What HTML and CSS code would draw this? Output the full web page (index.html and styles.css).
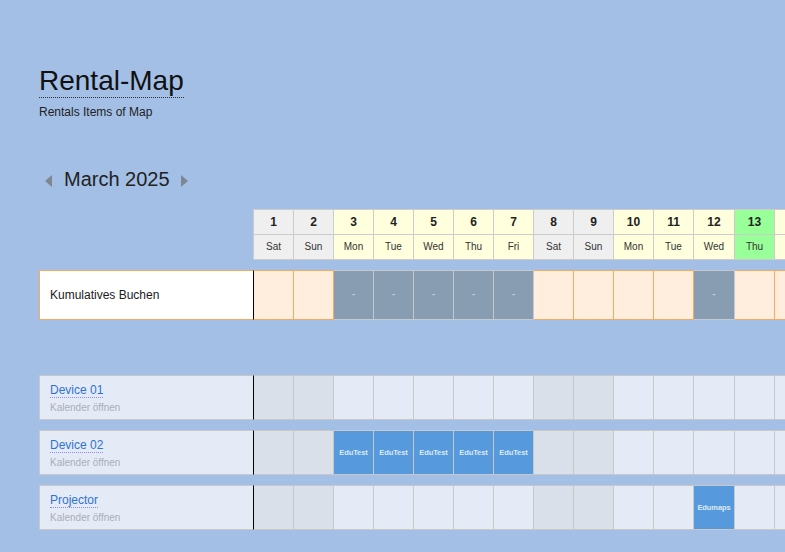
FILE: index.html
```html
<!DOCTYPE html>
<html lang="de">
<head>
<meta charset="utf-8">
<title>Rental-Map</title>
<link rel="stylesheet" href="styles.css">
</head>
<body>
<header class="page-head">
  <h1 class="title"><span>Rental-Map</span></h1>
  <p class="subtitle">Rentals Items of Map</p>
</header>

<nav class="month-nav">
  <svg class="arrow prev" width="7" height="12" viewBox="0 0 7 12"><polygon points="7,0 7,12 0,6" fill="#7d8794"/></svg>
  <span class="month">March 2025</span>
  <svg class="arrow next" width="7" height="12" viewBox="0 0 7 12"><polygon points="0,0 0,12 7,6" fill="#7d8794"/></svg>
</nav>

<section class="planner">
  <div class="row head-row">
    <div class="spacer"></div>
    <div class="dh we"><div class="num">1</div><div class="dn">Sat</div></div>
    <div class="dh we"><div class="num">2</div><div class="dn">Sun</div></div>
    <div class="dh"><div class="num">3</div><div class="dn">Mon</div></div>
    <div class="dh"><div class="num">4</div><div class="dn">Tue</div></div>
    <div class="dh"><div class="num">5</div><div class="dn">Wed</div></div>
    <div class="dh"><div class="num">6</div><div class="dn">Thu</div></div>
    <div class="dh"><div class="num">7</div><div class="dn">Fri</div></div>
    <div class="dh we"><div class="num">8</div><div class="dn">Sat</div></div>
    <div class="dh we"><div class="num">9</div><div class="dn">Sun</div></div>
    <div class="dh"><div class="num">10</div><div class="dn">Mon</div></div>
    <div class="dh"><div class="num">11</div><div class="dn">Tue</div></div>
    <div class="dh"><div class="num">12</div><div class="dn">Wed</div></div>
    <div class="dh today"><div class="num">13</div><div class="dn">Thu</div></div>
    <div class="dh"><div class="num">14</div><div class="dn">Fri</div></div>
    <div class="dh we"><div class="num">15</div><div class="dn">Sat</div></div>
    <div class="dh we"><div class="num">16</div><div class="dn">Sun</div></div>
    <div class="dh"><div class="num">17</div><div class="dn">Mon</div></div>
    <div class="dh"><div class="num">18</div><div class="dn">Tue</div></div>
    <div class="dh"><div class="num">19</div><div class="dn">Wed</div></div>
    <div class="dh"><div class="num">20</div><div class="dn">Thu</div></div>
    <div class="dh"><div class="num">21</div><div class="dn">Fri</div></div>
    <div class="dh we"><div class="num">22</div><div class="dn">Sat</div></div>
    <div class="dh we"><div class="num">23</div><div class="dn">Sun</div></div>
    <div class="dh"><div class="num">24</div><div class="dn">Mon</div></div>
    <div class="dh"><div class="num">25</div><div class="dn">Tue</div></div>
  </div>

  <div class="row cum-row">
    <div class="label cum-label">Kumulatives Buchen</div>
    <div class="c"></div><div class="c"></div>
    <div class="c booked">-</div><div class="c booked">-</div><div class="c booked">-</div><div class="c booked">-</div><div class="c booked">-</div>
    <div class="c"></div><div class="c"></div><div class="c"></div><div class="c"></div>
    <div class="c booked">-</div>
    <div class="c"></div><div class="c"></div><div class="c"></div><div class="c"></div><div class="c"></div><div class="c"></div><div class="c"></div><div class="c"></div><div class="c"></div><div class="c"></div><div class="c"></div><div class="c"></div><div class="c"></div>
  </div>

  <div class="row item-row first">
    <div class="label item-label"><a class="item-name">Device 01</a><div class="item-sub">Kalender öffnen</div></div>
    <div class="c we"></div><div class="c we"></div>
    <div class="c"></div><div class="c"></div><div class="c"></div><div class="c"></div><div class="c"></div>
    <div class="c we"></div><div class="c we"></div>
    <div class="c"></div><div class="c"></div><div class="c"></div><div class="c"></div><div class="c"></div>
    <div class="c we"></div><div class="c we"></div>
    <div class="c"></div><div class="c"></div><div class="c"></div><div class="c"></div><div class="c"></div>
    <div class="c we"></div><div class="c we"></div>
    <div class="c"></div><div class="c"></div>
  </div>

  <div class="row item-row">
    <div class="label item-label"><a class="item-name">Device 02</a><div class="item-sub">Kalender öffnen</div></div>
    <div class="c we"></div><div class="c we"></div>
    <div class="c bk">EduTest</div><div class="c bk">EduTest</div><div class="c bk">EduTest</div><div class="c bk">EduTest</div><div class="c bk">EduTest</div>
    <div class="c we"></div><div class="c we"></div>
    <div class="c"></div><div class="c"></div><div class="c"></div><div class="c"></div><div class="c"></div>
    <div class="c we"></div><div class="c we"></div>
    <div class="c"></div><div class="c"></div><div class="c"></div><div class="c"></div><div class="c"></div>
    <div class="c we"></div><div class="c we"></div>
    <div class="c"></div><div class="c"></div>
  </div>

  <div class="row item-row">
    <div class="label item-label"><a class="item-name">Projector</a><div class="item-sub">Kalender öffnen</div></div>
    <div class="c we"></div><div class="c we"></div>
    <div class="c"></div><div class="c"></div><div class="c"></div><div class="c"></div><div class="c"></div>
    <div class="c we"></div><div class="c we"></div>
    <div class="c"></div><div class="c"></div><div class="c bk">Edumaps</div><div class="c"></div><div class="c"></div>
    <div class="c we"></div><div class="c we"></div>
    <div class="c"></div><div class="c"></div><div class="c"></div><div class="c"></div><div class="c"></div>
    <div class="c we"></div><div class="c we"></div>
    <div class="c"></div><div class="c"></div>
  </div>
</section>
</body>
</html>
```

FILE: styles.css
```css
html, body {
  margin: 0;
  overflow: hidden;
  background: #a3bfe6;
}

body {
  padding-left: 39px;
  font-family: "Liberation Sans", Arial, sans-serif;
  color: #222;
}

.title {
  margin: 65px 0 0;
  font-size: 28px;
  font-weight: normal;
  line-height: 32px;
  color: #111;
}

.title span {
  display: inline-block;
  border-bottom: 1px dotted #333;
}

.subtitle {
  margin: 7px 0 0;
  font-size: 12px;
  line-height: 14px;
  color: #222;
}

.month-nav {
  margin-top: 49px;
  height: 23px;
  display: flex;
  align-items: center;
}

.arrow {
  display: block;
  margin-top: 3px;
}

.arrow.prev {
  margin-left: 6px;
}

.month {
  font-size: 20px;
  line-height: 23px;
  color: #222;
  margin: 0 11px 0 12px;
}

.planner {
  margin-top: 18px;
  width: max-content;
}

.row {
  display: flex;
}

.row > * {
  flex-shrink: 0;
}

/* header */
.spacer {
  width: 214px;
}

.dh {
  width: 39px;
  border: 1px solid #cccccc;
  border-right: none;
  background: #ffffdd;
  text-align: center;
  color: #333;
}

.dh.we {
  background: #efefef;
}

.dh.today {
  background: #99ff99;
}

.dh .num {
  height: 24px;
  line-height: 24px;
  font-size: 12px;
  font-weight: bold;
  color: #222;
  border-bottom: 1px solid #cccccc;
}

.dh .dn {
  height: 24px;
  line-height: 24px;
  font-size: 10px;
}

/* shared cells */
.label {
  width: 203px;
  border-right: 1px solid #000;
  padding-left: 10px;
}

.c {
  width: 39px;
  text-align: center;
}

.dh:nth-child(13),
.c:nth-child(13) {
  width: 40px;
}

/* cumulative row */
.cum-row {
  margin-top: 10px;
}

.cum-row > * {
  height: 48px;
  border-top: 1px solid #f6a95f;
  border-bottom: 1px solid #f6a95f;
}

.cum-label {
  background: #ffffff;
  border-left: 1px solid #f6a95f;
  border-right: 1px solid #000;
  font-size: 12px;
  line-height: 48px;
  color: #1a1a1a;
}

.cum-row .c {
  background: #ffeedd;
  border-right: 1px solid #f6a95f;
}

.cum-row .c.booked {
  background: #889db2;
  border-color: #c4c9cf;
  color: #bcd6f2;
  font-size: 9px;
  line-height: 46px;
  font-weight: bold;
}

/* item rows */
.item-row {
  margin-top: 10px;
}

.item-row.first {
  margin-top: 55px;
}

.item-row > * {
  height: 43px;
  border-top: 1px solid #c8c8c8;
  border-bottom: 1px solid #c8c8c8;
  background: #e4ebf6;
}

.item-label {
  height: 39px;
  border-left: 1px solid #c8c8c8;
  padding-top: 4px;
}

.item-name {
  display: inline-block;
  font-size: 12px;
  line-height: 14px;
  color: #2f72d2;
  border-bottom: 1px dotted #8a8ef0;
  cursor: pointer;
}

.item-sub {
  margin-top: 4px;
  font-size: 10px;
  line-height: 12px;
  color: #a9aeb6;
}

.item-row .c {
  border-right: 1px solid #c8c8c8;
}

.item-row .c.we {
  background: #d9e0ea;
}

.item-row .c.bk {
  background: #5699dc;
  color: #dde9f7;
  font-size: 7.5px;
  font-weight: bold;
  line-height: 43px;
  letter-spacing: -0.1px;
}
```
